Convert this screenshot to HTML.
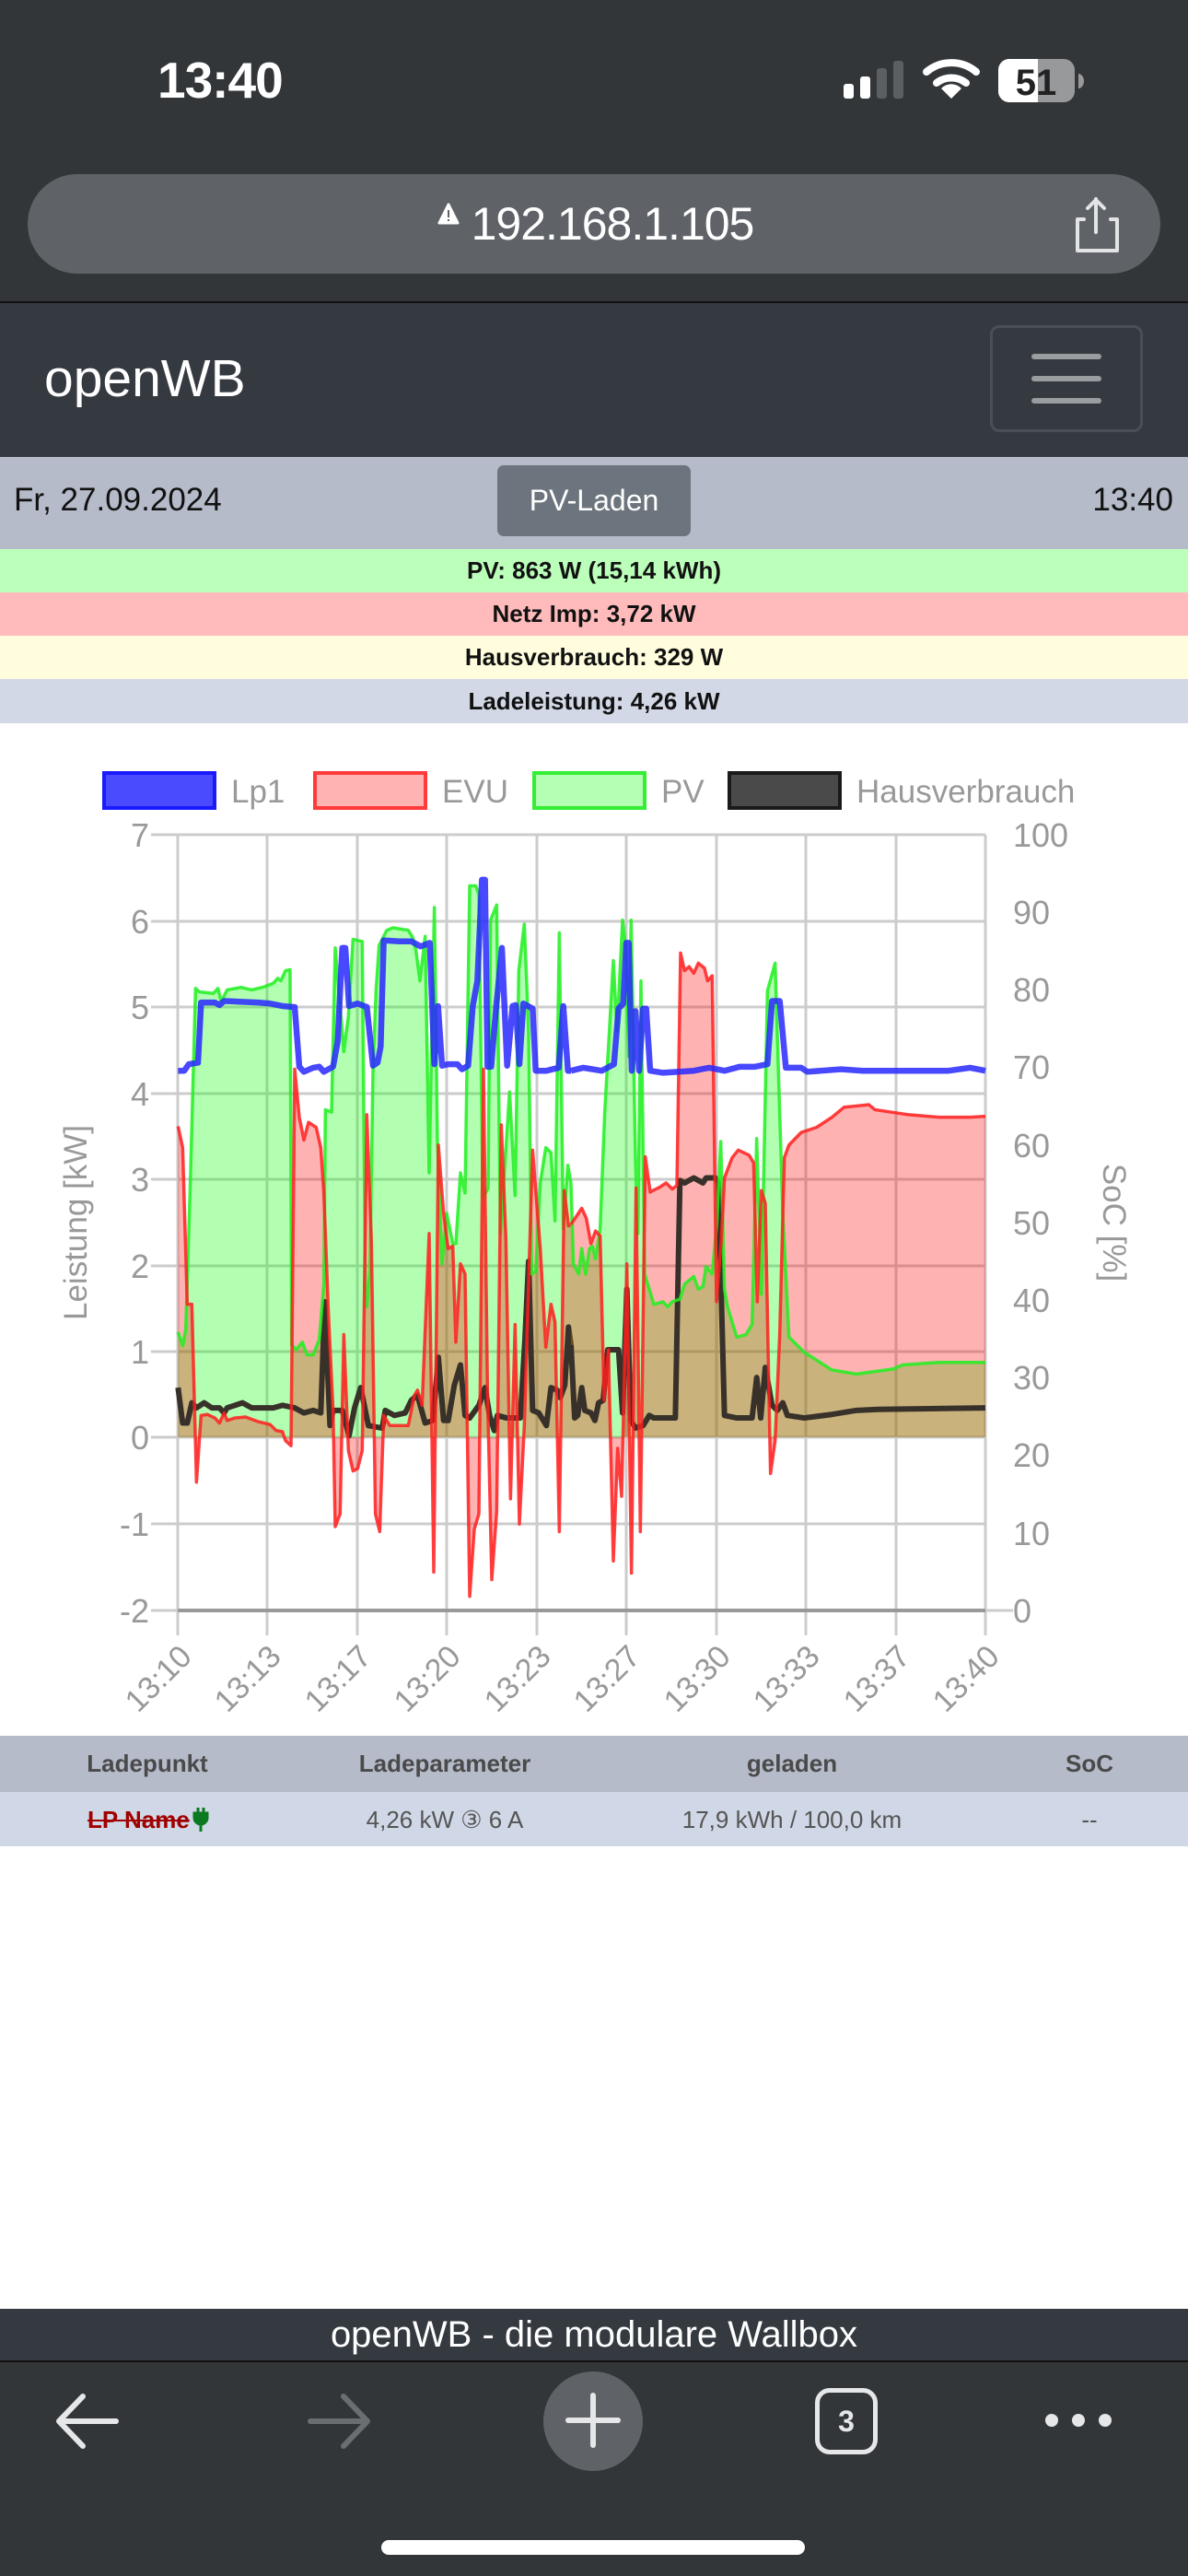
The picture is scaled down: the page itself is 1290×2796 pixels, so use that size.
<!DOCTYPE html>
<html><head><meta charset="utf-8">
<style>
*{margin:0;padding:0;box-sizing:border-box}
body{width:1290px;height:2796px;position:relative;background:#fff;font-family:"Liberation Sans",sans-serif;overflow:hidden}
.abs{position:absolute}
.bar{left:0;width:1290px;text-align:center;font-weight:bold;font-size:26px;color:#111}
</style></head><body>
<div class="abs" style="left:0;top:0;width:1290px;height:327px;background:#333639"></div>
<div class="abs" style="left:171px;top:55px;font-size:55px;font-weight:bold;color:#fff;letter-spacing:-1px">13:40</div>
<div class="abs" style="left:30px;top:189px;width:1230px;height:108px;border-radius:54px;background:#5f6367"></div>
<div class="abs" style="left:505px;top:214px;width:320px;text-align:center;font-size:50px;color:#fff;letter-spacing:-1px">192.168.1.105</div>
<div class="abs" style="left:0;top:327px;width:1290px;height:2px;background:#111"></div>
<div class="abs" style="left:0;top:329px;width:1290px;height:167px;background:#353940"></div>
<div class="abs" style="left:48px;top:378px;font-size:57px;color:#fff">openWB</div>
<div class="abs" style="left:1075px;top:353px;width:166px;height:116px;border:3px solid #4a4f57;border-radius:10px"></div>
<div class="abs" style="left:0;top:496px;width:1290px;height:100px;background:#b5bbc9"></div>
<div class="abs" style="left:15px;top:523px;font-size:35px;color:#111">Fr, 27.09.2024</div>
<div class="abs" style="left:540px;top:505px;width:210px;height:77px;background:#6c757d;border-radius:7px;color:#fff;font-size:32px;text-align:center;line-height:77px">PV-Laden</div>
<div class="abs" style="right:16px;top:523px;font-size:35px;color:#111">13:40</div>
<div class="abs bar" style="top:596px;height:47px;line-height:47px;background:#bbffbb">PV: 863 W (15,14 kWh)</div>
<div class="abs bar" style="top:643px;height:47px;line-height:47px;background:#ffbbbb">Netz Imp: 3,72 kW</div>
<div class="abs bar" style="top:690px;height:47px;line-height:47px;background:#fffddd">Hausverbrauch: 329 W</div>
<div class="abs bar" style="top:737px;height:48px;line-height:48px;background:#d2d8e6">Ladeleistung: 4,26 kW</div>

<div class="abs" style="left:0;top:1884px;width:1290px;height:61px;background:#b5bbc9"></div>
<div class="abs" style="left:0;top:1945px;width:1290px;height:59px;background:#d0d7e6"></div>
<div class="abs" style="left:60px;top:1899px;width:200px;text-align:center;font-weight:bold;font-size:26px;color:#4a4a4a">Ladepunkt</div>
<div class="abs" style="left:383px;top:1899px;width:200px;text-align:center;font-weight:bold;font-size:26px;color:#4a4a4a">Ladeparameter</div>
<div class="abs" style="left:760px;top:1899px;width:200px;text-align:center;font-weight:bold;font-size:26px;color:#4a4a4a">geladen</div>
<div class="abs" style="left:1083px;top:1899px;width:200px;text-align:center;font-weight:bold;font-size:26px;color:#4a4a4a">SoC</div>
<div class="abs" style="left:95px;top:1960px;font-weight:bold;font-size:26px;color:#a00000;text-decoration:line-through">LP Name</div>
<div class="abs" style="left:373px;top:1960px;width:220px;text-align:center;font-size:26px;color:#555">4,26 kW ③ 6 A</div>
<div class="abs" style="left:710px;top:1960px;width:300px;text-align:center;font-size:26px;color:#555">17,9 kWh / 100,0 km</div>
<div class="abs" style="left:1083px;top:1960px;width:200px;text-align:center;font-size:26px;color:#555">--</div>

<div class="abs" style="left:0;top:2506px;width:1290px;height:56px;background:#343a40;color:#fff;font-size:40px;text-align:center;line-height:56px">openWB - die modulare Wallbox</div>
<div class="abs" style="left:0;top:2562px;width:1290px;height:2px;background:#111"></div>
<div class="abs" style="left:0;top:2564px;width:1290px;height:232px;background:#333639"></div>
<div class="abs" style="left:590px;top:2574px;width:108px;height:108px;border-radius:50%;background:#5f6367"></div>
<div class="abs" style="left:885px;top:2592px;width:68px;height:72px;border:5px solid #e6e7e9;border-radius:16px;color:#e6e7e9;font-size:32px;font-weight:bold;text-align:center;line-height:62px">3</div>
<div class="abs" style="left:414px;top:2757px;width:460px;height:16px;border-radius:8px;background:#fff"></div>

<svg class="abs" style="left:0;top:0" width="1290" height="2796" viewBox="0 0 1290 2796">
<rect x="916" y="91" width="11" height="16" rx="3" fill="#fff"/>
<rect x="934" y="83" width="11" height="24" rx="3" fill="#fff"/>
<rect x="952" y="74" width="11" height="33" rx="3" fill="#5c5f62"/>
<rect x="970" y="66" width="11" height="41" rx="3" fill="#5c5f62"/>
<path d="M1006 78 A42 42 0 0 1 1060 78" stroke="#fff" stroke-width="8" fill="none" stroke-linecap="round"/>
<path d="M1017 90 A26 26 0 0 1 1049 90" stroke="#fff" stroke-width="8" fill="none" stroke-linecap="round"/>
<path d="M1033 107 L1022 96 A15 15 0 0 1 1044 96 Z" fill="#fff"/>
<rect x="1084" y="64" width="83" height="47" rx="12" fill="#98999b"/>
<path d="M1096 64 H1127 V111 H1096 A12 12 0 0 1 1084 99 V76 A12 12 0 0 1 1096 64Z" fill="#fff"/>
<path d="M1171 80 a6 8 0 0 1 0 16z" fill="#98999b"/>
<text x="1125" y="103" text-anchor="middle" font-size="40" font-weight="bold" fill="#222" font-family="Liberation Sans">51</text>
<path d="M487 222 L477 242 H497 Z" fill="#fff" stroke="#fff" stroke-width="3" stroke-linejoin="round"/>
<rect x="486" y="228" width="2" height="8" fill="#5f6367"/><rect x="486" y="238" width="2" height="2" fill="#5f6367"/>
<path d="M1177 238 H1170 V272 H1213 V238 H1206 M1190 216 V252 M1181 226 L1190 217 L1199 226" stroke="#e3e4e6" stroke-width="4" fill="none" stroke-linecap="round" stroke-linejoin="round"/>
<g stroke="#9a9da0" stroke-width="6" stroke-linecap="round"><line x1="1123" y1="387" x2="1193" y2="387"/><line x1="1123" y1="411" x2="1193" y2="411"/><line x1="1123" y1="435" x2="1193" y2="435"/></g>
<path d="M215 1962 v6 M221 1962 v6 M211 1968 h14 v5 a7 7 0 0 1 -14 0z M218 1980 v8" stroke="#0a7a20" stroke-width="3" fill="#0a7a20"/>
<path d="M126 2628 H66 M90 2601 L64 2628 L90 2655" stroke="#e6e7e9" stroke-width="6" fill="none" stroke-linecap="round" stroke-linejoin="round"/>
<path d="M337 2628 H397 M373 2601 L399 2628 L373 2655" stroke="#6b6e71" stroke-width="6" fill="none" stroke-linecap="round" stroke-linejoin="round"/>
<path d="M644 2600 V2654 M617 2627 H671" stroke="#e6e7e9" stroke-width="6" stroke-linecap="round"/>
<circle cx="1142" cy="2627" r="7" fill="#e6e7e9"/><circle cx="1171" cy="2627" r="7" fill="#e6e7e9"/><circle cx="1200" cy="2627" r="7" fill="#e6e7e9"/>

<g font-family="Liberation Sans" font-size="35" fill="#999">
<rect x="113" y="839" width="120" height="38" fill="#4a4aff" stroke="#1a1aff" stroke-width="4"/>
<text x="251" y="871">Lp1</text>
<rect x="342" y="839" width="120" height="38" fill="#ffb3b3" stroke="#ff3a3a" stroke-width="4"/>
<text x="480" y="871">EVU</text>
<rect x="580" y="839" width="120" height="38" fill="#b3ffb3" stroke="#33ee33" stroke-width="4"/>
<text x="718" y="871">PV</text>
<rect x="792" y="839" width="120" height="38" fill="#4a4a4a" stroke="#1a1a1a" stroke-width="4"/>
<text x="930" y="871">Hausverbrauch</text>
</g>
<g stroke="#cccccc" stroke-width="3">
<line x1="164" y1="906" x2="1070" y2="906"/><line x1="164" y1="1000" x2="1070" y2="1000"/><line x1="164" y1="1093" x2="1070" y2="1093"/><line x1="164" y1="1187" x2="1070" y2="1187"/><line x1="164" y1="1280" x2="1070" y2="1280"/><line x1="164" y1="1374" x2="1070" y2="1374"/><line x1="164" y1="1467" x2="1070" y2="1467"/><line x1="164" y1="1560" x2="1070" y2="1560"/><line x1="164" y1="1654" x2="1070" y2="1654"/>
<line x1="193" y1="906" x2="193" y2="1775"/><line x1="290" y1="906" x2="290" y2="1775"/><line x1="388" y1="906" x2="388" y2="1775"/><line x1="485" y1="906" x2="485" y2="1775"/><line x1="583" y1="906" x2="583" y2="1775"/><line x1="680" y1="906" x2="680" y2="1775"/><line x1="778" y1="906" x2="778" y2="1775"/><line x1="875" y1="906" x2="875" y2="1775"/><line x1="973" y1="906" x2="973" y2="1775"/><line x1="1070" y1="906" x2="1070" y2="1775"/>
</g>
<line x1="164" y1="1748" x2="1100" y2="1748" stroke="#cccccc" stroke-width="3"/>
<line x1="193" y1="1748" x2="1070" y2="1748" stroke="#999" stroke-width="4"/>
<g font-family="Liberation Sans" font-size="36" fill="#999" text-anchor="end">
<text x="162" y="919">7</text><text x="162" y="1013">6</text><text x="162" y="1106">5</text><text x="162" y="1200">4</text><text x="162" y="1293">3</text><text x="162" y="1387">2</text><text x="162" y="1480">1</text><text x="162" y="1573">0</text><text x="162" y="1667">-1</text><text x="162" y="1761">-2</text>
</g>
<g font-family="Liberation Sans" font-size="36" fill="#999">
<text x="1100" y="919">100</text><text x="1100" y="1003">90</text><text x="1100" y="1087">80</text><text x="1100" y="1171">70</text><text x="1100" y="1256">60</text><text x="1100" y="1340">50</text><text x="1100" y="1424">40</text><text x="1100" y="1508">30</text><text x="1100" y="1592">20</text><text x="1100" y="1677">10</text><text x="1100" y="1761">0</text>
<text transform="translate(94,1327) rotate(-90)" text-anchor="middle" font-size="35">Leistung [kW]</text>
<text transform="translate(1198,1327) rotate(90)" text-anchor="middle" font-size="35">SoC [%]</text>
</g>
<g font-family="Liberation Sans" font-size="34" fill="#999" text-anchor="end">
<text transform="translate(210,1800) rotate(-45)">13:10</text>
<text transform="translate(307,1800) rotate(-45)">13:13</text>
<text transform="translate(405,1800) rotate(-45)">13:17</text>
<text transform="translate(502,1800) rotate(-45)">13:20</text>
<text transform="translate(600,1800) rotate(-45)">13:23</text>
<text transform="translate(697,1800) rotate(-45)">13:27</text>
<text transform="translate(795,1800) rotate(-45)">13:30</text>
<text transform="translate(892,1800) rotate(-45)">13:33</text>
<text transform="translate(990,1800) rotate(-45)">13:37</text>
<text transform="translate(1087,1800) rotate(-45)">13:40</text>
</g>

<g transform="translate(180,900) scale(0.33333,0.54855)">
<polygon fill="rgba(0,255,0,0.3)" points="40,1203 40,995 55,1022 65,990 80,700 97,315 110,322 155,325 170,315 180,340 190,330 200,318 245,313 280,318 320,312 350,305 365,295 375,300 390,280 405,278 410,1020 425,1030 445,1015 460,1040 480,1040 500,1010 515,900 520,555 540,560 552,235 565,330 580,440 595,370 610,218 640,222 650,900 655,945 665,870 675,480 685,320 695,230 720,200 740,195 790,200 805,215 815,240 828,300 845,212 858,680 875,155 885,620 900,860 915,760 935,820 945,820 960,680 975,720 990,112 1010,112 1020,130 1033,730 1050,710 1058,180 1078,150 1090,800 1105,660 1120,520 1138,725 1150,280 1168,188 1182,400 1192,880 1205,875 1220,700 1238,630 1255,640 1268,775 1282,205 1295,790 1310,665 1320,700 1320,1203"/>
<polygon fill="rgba(255,0,0,0.3)" points="40,1203 40,588 55,630 70,940 85,940 100,1292 115,1160 135,1158 160,1165 175,1175 190,1155 200,1170 225,1165 260,1163 300,1172 340,1178 360,1190 380,1192 390,1210 408,1220 420,475 435,570 450,615 465,580 490,590 505,630 515,720 530,960 545,1150 552,1380 568,1355 580,1000 595,1230 610,1270 625,1265 640,1230 655,565 670,820 683,1355 697,1390 710,1160 730,1180 790,1180 810,1120 820,1110 835,1140 858,800 873,1470 888,625 905,760 920,830 935,825 945,1015 960,860 975,880 990,1518 1005,1385 1020,1355 1035,475 1048,1110 1062,1485 1078,1350 1093,585 1108,810 1123,1325 1138,980 1152,1375 1168,1180 1195,635 1220,830 1238,1025 1255,940 1268,975 1282,1390 1298,715 1312,785 1320,782 1320,1203"/>
<polyline vector-effect="non-scaling-stroke" stroke="#38312a" stroke-width="6" fill="none" stroke-linejoin="round" points="40,1105 55,1175 70,1175 85,1135 100,1145 125,1135 150,1145 175,1145 190,1155 200,1145 250,1135 280,1145 350,1145 380,1140 420,1145 450,1155 480,1150 505,1155 518,935 535,1180 545,1150 575,1150 597,1200 615,1145 635,1105 660,1180 705,1185 715,1150 745,1160 780,1155 800,1130 820,1120 845,1175 870,1170 888,1045 905,1170 920,1170 940,1100 960,1060 975,1160 990,1165 1020,1140 1040,1105 1055,1160 1070,1190 1080,1160 1110,1165 1155,1165 1170,1010 1182,855 1195,1150 1215,1155 1240,1180 1255,1105 1275,1110 1285,1125 1300,1100 1312,985 1320,1020"/>
<polyline vector-effect="non-scaling-stroke" stroke="rgba(30,240,30,0.85)" stroke-width="3.5" fill="none" stroke-linejoin="round" points="40,995 55,1022 65,990 80,700 97,315 110,322 155,325 170,315 180,340 190,330 200,318 245,313 280,318 320,312 350,305 365,295 375,300 390,280 405,278 410,1020 425,1030 445,1015 460,1040 480,1040 500,1010 515,900 520,555 540,560 552,235 565,330 580,440 595,370 610,218 640,222 650,900 655,945 665,870 675,480 685,320 695,230 720,200 740,195 790,200 805,215 815,240 828,300 845,212 858,680 875,155 885,620 900,860 915,760 935,820 945,820 960,680 975,720 990,112 1010,112 1020,130 1033,730 1050,710 1058,180 1078,150 1090,800 1105,660 1120,520 1138,725 1150,280 1168,188 1182,400 1192,880 1205,875 1220,700 1238,630 1255,640 1268,775 1282,205 1295,790 1310,665 1320,700"/>
<polyline vector-effect="non-scaling-stroke" stroke="rgba(255,30,30,0.85)" stroke-width="3.5" fill="none" stroke-linejoin="round" points="40,588 55,630 70,940 85,940 100,1292 115,1160 135,1158 160,1165 175,1175 190,1155 200,1170 225,1165 260,1163 300,1172 340,1178 360,1190 380,1192 390,1210 408,1220 420,475 435,570 450,615 465,580 490,590 505,630 515,720 530,960 545,1150 552,1380 568,1355 580,1000 595,1230 610,1270 625,1265 640,1230 655,565 670,820 683,1355 697,1390 710,1160 730,1180 790,1180 810,1120 820,1110 835,1140 858,800 873,1470 888,625 905,760 920,830 935,825 945,1015 960,860 975,880 990,1518 1005,1385 1020,1355 1035,475 1048,1110 1062,1485 1078,1350 1093,585 1108,810 1123,1325 1138,980 1152,1375 1168,1180 1195,635 1220,830 1238,1025 1255,940 1268,975 1282,1390 1298,715 1312,785 1320,782"/>
<polyline vector-effect="non-scaling-stroke" stroke="rgba(40,40,255,0.85)" stroke-width="6.5" fill="none" stroke-linejoin="round" points="40,478 60,478 75,465 105,462 115,343 160,343 175,348 190,340 300,343 340,345 380,350 420,352 435,470 450,480 480,472 500,470 515,480 545,470 560,420 575,235 585,235 597,350 625,345 655,352 675,468 690,462 700,430 710,220 760,222 800,222 830,232 860,225 875,465 887,350 900,468 920,465 950,465 965,475 985,468 1000,350 1015,300 1030,100 1040,100 1048,470 1060,470 1075,360 1095,235 1112,468 1130,350 1140,348 1152,465 1165,345 1195,355 1205,478 1240,478 1280,472 1295,350 1310,478 1320,478"/>
</g>
<g transform="translate(620,900) scale(0.33333,0.54855)">
<polygon fill="rgba(0,255,0,0.3)" points="0,1203 0,700 8,860 25,880 35,830 48,880 60,830 70,825 80,850 95,790 110,560 125,400 138,260 150,400 168,180 178,230 188,450 196,180 210,650 218,800 228,300 240,880 270,940 300,935 315,945 330,935 355,930 370,900 400,885 415,910 430,905 440,865 460,880 475,780 488,618 500,910 510,945 540,1005 570,1000 590,980 605,612 620,920 640,320 665,265 690,760 710,1005 760,1035 850,1070 930,1078 1050,1068 1080,1060 1200,1055 1350,1055 1350,1203"/>
<polygon fill="rgba(255,0,0,0.3)" points="0,1203 0,785 35,750 50,770 65,820 80,795 95,805 108,1130 122,1030 138,1448 152,1225 165,1320 182,860 197,1472 212,710 226,1390 242,648 258,718 290,708 310,700 330,712 345,705 357,245 370,280 385,272 400,285 415,265 435,275 445,300 460,290 474,935 490,810 500,690 525,650 545,635 580,645 595,660 607,935 620,715 633,740 650,1275 665,1210 680,1000 695,650 710,625 750,600 800,590 850,570 890,550 940,547 970,545 990,555 1100,565 1200,570 1300,570 1350,568 1350,1203"/>
<polyline vector-effect="non-scaling-stroke" stroke="#38312a" stroke-width="6" fill="none" stroke-linejoin="round" points="0,1020 12,1165 22,1160 35,1105 45,1150 65,1155 78,1170 90,1135 105,1130 120,1030 155,1030 168,1155 182,910 195,1170 210,1185 235,1180 255,1160 270,1165 340,1165 355,695 370,700 400,690 430,700 440,690 470,690 480,700 500,1160 540,1165 590,1165 605,1085 618,1165 633,1065 655,1140 672,1150 690,1135 705,1160 760,1165 850,1158 930,1150 1000,1148 1350,1145"/>
<polyline vector-effect="non-scaling-stroke" stroke="rgba(30,240,30,0.85)" stroke-width="3.5" fill="none" stroke-linejoin="round" points="0,700 8,860 25,880 35,830 48,880 60,830 70,825 80,850 95,790 110,560 125,400 138,260 150,400 168,180 178,230 188,450 196,180 210,650 218,800 228,300 240,880 270,940 300,935 315,945 330,935 355,930 370,900 400,885 415,910 430,905 440,865 460,880 475,780 488,618 500,910 510,945 540,1005 570,1000 590,980 605,612 620,920 640,320 665,265 690,760 710,1005 760,1035 850,1070 930,1078 1050,1068 1080,1060 1200,1055 1350,1055"/>
<polyline vector-effect="non-scaling-stroke" stroke="rgba(255,30,30,0.85)" stroke-width="3.5" fill="none" stroke-linejoin="round" points="0,782 35,750 50,770 65,820 80,795 95,805 108,1130 122,1030 138,1448 152,1225 165,1320 182,860 197,1472 212,710 226,1390 242,648 258,718 290,708 310,700 330,712 345,705 357,245 370,280 385,272 400,285 415,265 435,275 445,300 460,290 474,935 490,810 500,690 525,650 545,635 580,645 595,660 607,935 620,715 633,740 650,1275 665,1210 680,1000 695,650 710,625 750,600 800,590 850,570 890,550 940,547 970,545 990,555 1100,565 1200,570 1300,570 1350,568"/>
<polyline vector-effect="non-scaling-stroke" stroke="rgba(40,40,255,0.85)" stroke-width="6.5" fill="none" stroke-linejoin="round" points="0,478 40,472 100,478 140,465 155,355 170,345 180,225 188,225 198,478 210,360 222,478 235,355 245,355 258,478 300,482 400,478 450,472 500,478 550,470 600,470 640,465 655,340 680,340 700,472 750,472 770,480 880,475 950,478 1100,478 1230,478 1300,472 1350,478"/>
</g>
</svg>
</body></html>
